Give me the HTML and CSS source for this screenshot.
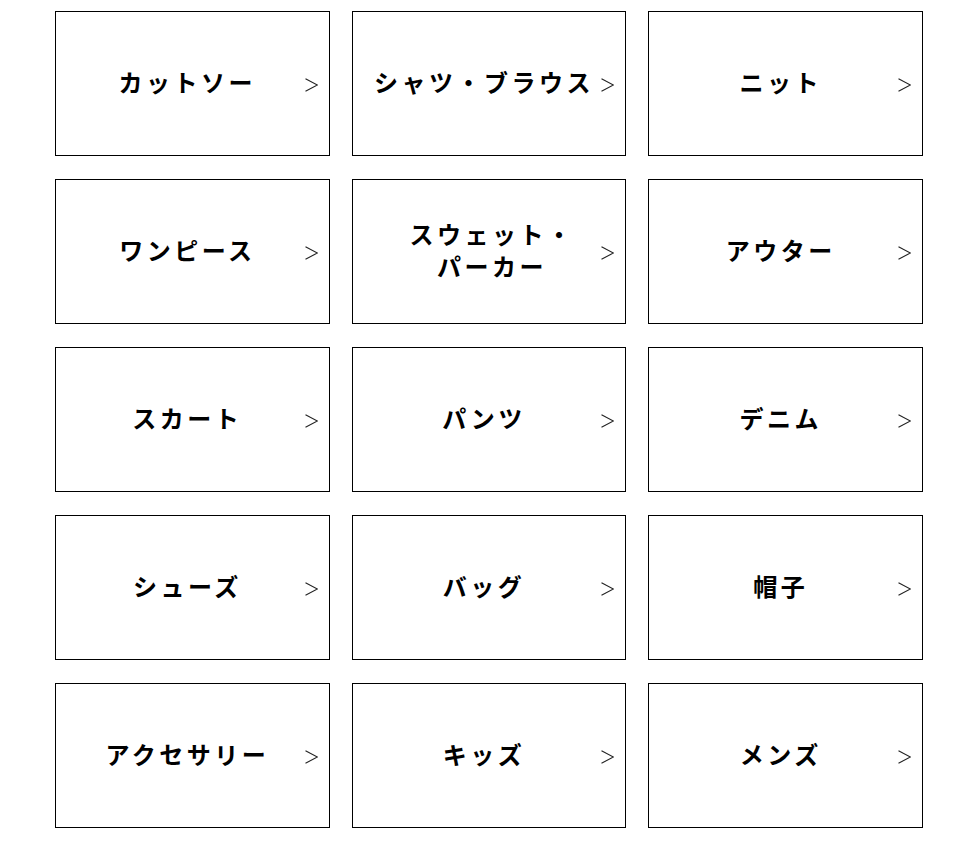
FILE: index.html
```html
<!DOCTYPE html>
<html lang="ja">
<head>
<meta charset="utf-8">
<title>カテゴリー</title>
<link rel="stylesheet" href="styles.css">
</head>
<body>
<ul class="category-grid">
  <li><a class="category-card" href="#"><span class="category-name">カットソー</span><svg class="arrow" viewBox="0 0 13 14" width="13" height="14"><polyline points="0.5,0.8 12.4,7 0.5,13.2"/></svg></a></li>
  <li><a class="category-card" href="#"><span class="category-name">シャツ・ブラウス</span><svg class="arrow" viewBox="0 0 13 14" width="13" height="14"><polyline points="0.5,0.8 12.4,7 0.5,13.2"/></svg></a></li>
  <li><a class="category-card" href="#"><span class="category-name">ニット</span><svg class="arrow" viewBox="0 0 13 14" width="13" height="14"><polyline points="0.5,0.8 12.4,7 0.5,13.2"/></svg></a></li>
  <li><a class="category-card" href="#"><span class="category-name">ワンピース</span><svg class="arrow" viewBox="0 0 13 14" width="13" height="14"><polyline points="0.5,0.8 12.4,7 0.5,13.2"/></svg></a></li>
  <li><a class="category-card" href="#"><span class="category-name category-name--wrap">スウェット・<br>パーカー</span><svg class="arrow" viewBox="0 0 13 14" width="13" height="14"><polyline points="0.5,0.8 12.4,7 0.5,13.2"/></svg></a></li>
  <li><a class="category-card" href="#"><span class="category-name">アウター</span><svg class="arrow" viewBox="0 0 13 14" width="13" height="14"><polyline points="0.5,0.8 12.4,7 0.5,13.2"/></svg></a></li>
  <li><a class="category-card" href="#"><span class="category-name">スカート</span><svg class="arrow" viewBox="0 0 13 14" width="13" height="14"><polyline points="0.5,0.8 12.4,7 0.5,13.2"/></svg></a></li>
  <li><a class="category-card" href="#"><span class="category-name">パンツ</span><svg class="arrow" viewBox="0 0 13 14" width="13" height="14"><polyline points="0.5,0.8 12.4,7 0.5,13.2"/></svg></a></li>
  <li><a class="category-card" href="#"><span class="category-name">デニム</span><svg class="arrow" viewBox="0 0 13 14" width="13" height="14"><polyline points="0.5,0.8 12.4,7 0.5,13.2"/></svg></a></li>
  <li><a class="category-card" href="#"><span class="category-name">シューズ</span><svg class="arrow" viewBox="0 0 13 14" width="13" height="14"><polyline points="0.5,0.8 12.4,7 0.5,13.2"/></svg></a></li>
  <li><a class="category-card" href="#"><span class="category-name">バッグ</span><svg class="arrow" viewBox="0 0 13 14" width="13" height="14"><polyline points="0.5,0.8 12.4,7 0.5,13.2"/></svg></a></li>
  <li><a class="category-card" href="#"><span class="category-name">帽子</span><svg class="arrow" viewBox="0 0 13 14" width="13" height="14"><polyline points="0.5,0.8 12.4,7 0.5,13.2"/></svg></a></li>
  <li><a class="category-card" href="#"><span class="category-name">アクセサリー</span><svg class="arrow" viewBox="0 0 13 14" width="13" height="14"><polyline points="0.5,0.8 12.4,7 0.5,13.2"/></svg></a></li>
  <li><a class="category-card" href="#"><span class="category-name">キッズ</span><svg class="arrow" viewBox="0 0 13 14" width="13" height="14"><polyline points="0.5,0.8 12.4,7 0.5,13.2"/></svg></a></li>
  <li><a class="category-card" href="#"><span class="category-name">メンズ</span><svg class="arrow" viewBox="0 0 13 14" width="13" height="14"><polyline points="0.5,0.8 12.4,7 0.5,13.2"/></svg></a></li>
</ul>
</body>
</html>
```

FILE: styles.css
```css
* { box-sizing: border-box; }

html, body {
  margin: 0;
  padding: 0;
  background: #fff;
}

body {
  font-family: "Noto Sans CJK JP", "Noto Sans", sans-serif;
  color: #000;
}

.category-grid {
  list-style: none;
  margin: 11px 0 0 55px;
  padding: 0;
  width: 868px;
  display: grid;
  grid-template-columns: repeat(3, 1fr);
  column-gap: 22px;
  row-gap: 23px;
}

.category-grid li {
  margin: 0;
  padding: 0;
}

.category-card {
  position: relative;
  display: flex;
  align-items: center;
  justify-content: center;
  height: 145px;
  padding: 0 30px 4px 20px;
  border: 1px solid #000;
  color: #000;
  text-decoration: none;
}

.category-name {
  display: block;
  text-align: center;
  font-size: 24px;
  font-weight: 700;
  line-height: 32px;
  letter-spacing: 3.5px;
}

.category-name--wrap {
  margin-left: 16px;
}

.arrow {
  position: absolute;
  right: 11px;
  top: 50%;
  margin-top: -6px;
  fill: none;
  stroke: #222;
  stroke-width: 1.1;
}
```
